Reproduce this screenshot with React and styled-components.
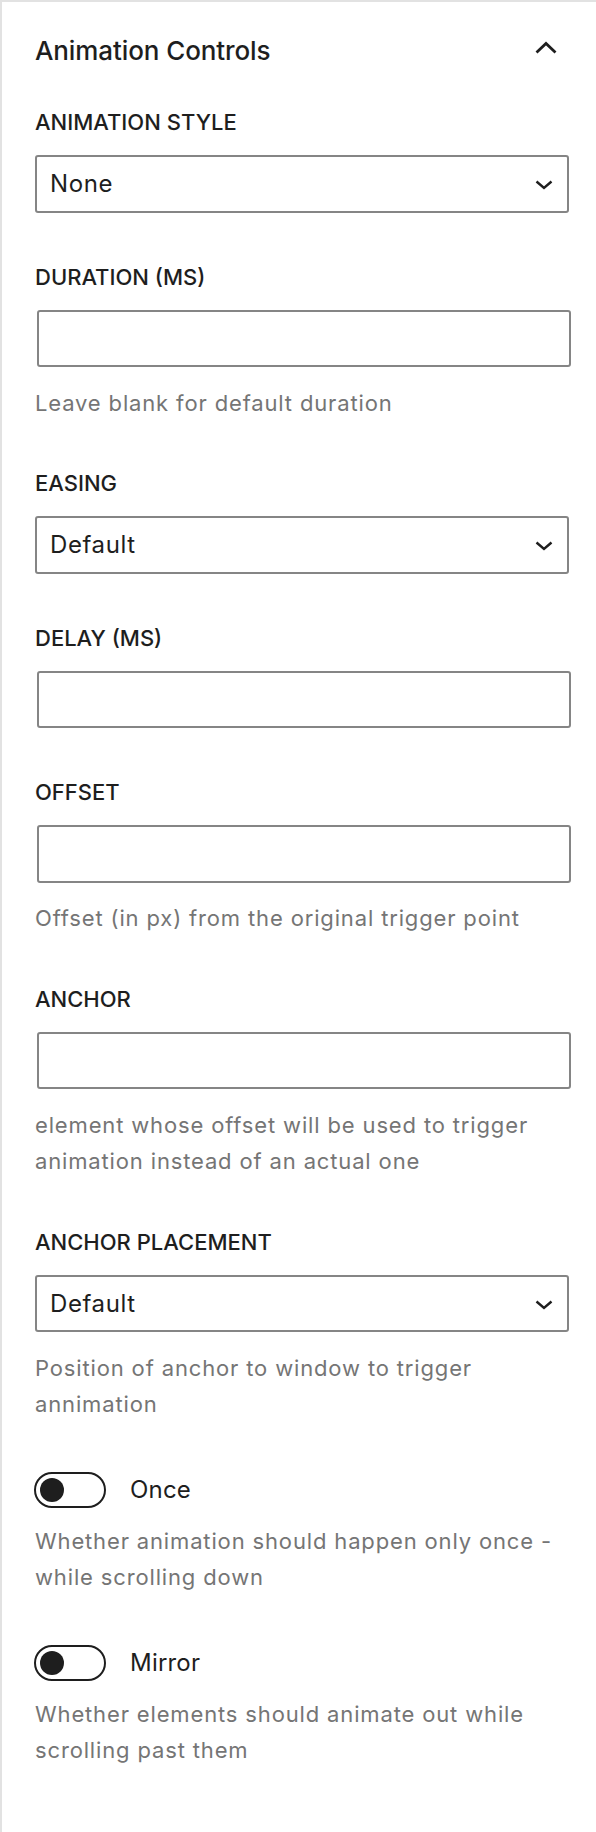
import { styled, createGlobalStyle } from "styled-components";

const GlobalStyle = createGlobalStyle`
  html, body {
    margin: 0;
    padding: 0;
    background: #fff;
  }
  body {
    font-family: Inter, "Noto Sans", "Liberation Sans", sans-serif;
    color: #1e1e1e;
  }
  * {
    box-sizing: border-box;
  }
`;

const fields = [
  { type: "select", label: "Animation Style", value: "None" },
  { type: "input", label: "Duration (ms)", help: "Leave blank for default duration" },
  { type: "select", label: "Easing", value: "Default" },
  { type: "input", label: "Delay (ms)" },
  { type: "input", label: "Offset", help: "Offset (in px) from the original trigger point" },
  {
    type: "input",
    label: "Anchor",
    help: "element whose offset will be used to trigger animation instead of an actual one",
  },
  {
    type: "select",
    label: "Anchor Placement",
    value: "Default",
    help: "Position of anchor to window to trigger annimation",
  },
  { type: "toggle", label: "Once", help: "Whether animation should happen only once - while scrolling down" },
  { type: "toggle", label: "Mirror", help: "Whether elements should animate out while scrolling past them" },
];

const ChevronUp = () => (
  <HeaderIcon width="24" height="24" viewBox="0 0 24 24" fill="none">
    <path d="M2.5 16.5 L12 7.5 L21.5 16.5" stroke="#1e1e1e" strokeWidth="2.8" />
  </HeaderIcon>
);

const ChevronDown = () => (
  <svg width="18" height="10" viewBox="0 0 18 10" fill="none">
    <path d="M1.5 1.5 L9 8 L16.5 1.5" stroke="#1e1e1e" strokeWidth="2.4" />
  </svg>
);

const Field = ({ field }) => {
  if (field.type === "toggle") {
    return (
      <ToggleField>
        <ToggleRow>
          <Track>
            <Knob />
          </Track>
          <ToggleLabel>{field.label}</ToggleLabel>
        </ToggleRow>
        {field.help && <Help $tight>{field.help}</Help>}
      </ToggleField>
    );
  }

  return (
    <FieldWrap>
      <Label>{field.label}</Label>
      {field.type === "select" ? (
        <SelectBox>
          <span>{field.value}</span>
          <ChevronDown />
        </SelectBox>
      ) : (
        <TextInput type="text" />
      )}
      {field.help && <Help>{field.help}</Help>}
    </FieldWrap>
  );
};

const App = () => {
  return (
    <>
      <GlobalStyle />
      <Panel>
        <Header>
          <Title>Animation Controls</Title>
          <ChevronUp />
        </Header>
        {fields.map((f) => (
          <Field key={f.label} field={f} />
        ))}
      </Panel>
    </>
  );
};

const Panel = styled.div`
  min-height: 1832px;
  border-left: 2px solid #e2e2e2;
  border-top: 2px solid #e2e2e2;
  padding: 32.5px 27px 0 33px;
`;

const Header = styled.div`
  display: flex;
  justify-content: space-between;
  align-items: flex-start;
  margin-bottom: 39.5px;
`;

const Title = styled.h2`
  margin: 0;
  font-size: 26px;
  line-height: 32px;
  font-weight: 500;
  letter-spacing: -0.1px;
`;

const HeaderIcon = styled.svg`
  display: block;
  margin-top: 1px;
  margin-right: 11.5px;
`;

const FieldWrap = styled.div`
  margin-bottom: 48px;
`;

const Label = styled.label`
  display: block;
  font-size: 22px;
  line-height: 32px;
  font-weight: 500;
  text-transform: uppercase;
  margin-bottom: 17px;
`;

const SelectBox = styled.div`
  display: flex;
  align-items: center;
  justify-content: space-between;
  width: 534px;
  height: 57.6px;
  padding: 0 14px 0 13px;
  border: 2px solid #858585;
  border-radius: 3px;
  font-size: 24px;
  letter-spacing: 0.6px;
  color: #1e1e1e;

  svg {
    display: block;
    margin-top: 2px;
  }
`;

const TextInput = styled.input`
  display: block;
  width: 534px;
  height: 57.6px;
  margin: 0 0 0 2px;
  padding: 0 14px;
  border: 2px solid #858585;
  border-radius: 3px;
  font-family: inherit;
  font-size: 24px;
  background: #fff;
  outline: none;
`;

const Help = styled.p`
  margin: ${(p) => (p.$tight ? "15px" : "17.4px")} 0 -2px;
  font-size: 22px;
  line-height: 36.5px;
  letter-spacing: 0.85px;
  color: #757575;
  max-width: 534px;
`;

/* margin collapses with the field above (48 - 2) */
const ToggleField = styled.div`
  margin: 51px 0 48px;
`;

const ToggleRow = styled.div`
  display: flex;
  align-items: center;
  gap: 24px;
  margin-left: -1px;
`;

const Track = styled.span`
  position: relative;
  display: flex;
  align-items: center;
  width: 72px;
  height: 36px;
  border: 2.4px solid #1e1e1e;
  border-radius: 18px;
  padding-left: 3.6px;
  background: #fff;
`;

const Knob = styled.span`
  width: 24px;
  height: 24px;
  border-radius: 50%;
  background: #1e1e1e;
`;

const ToggleLabel = styled.span`
  font-size: 24px;
  line-height: 36px;
  letter-spacing: 0.2px;
`;

export default App;
